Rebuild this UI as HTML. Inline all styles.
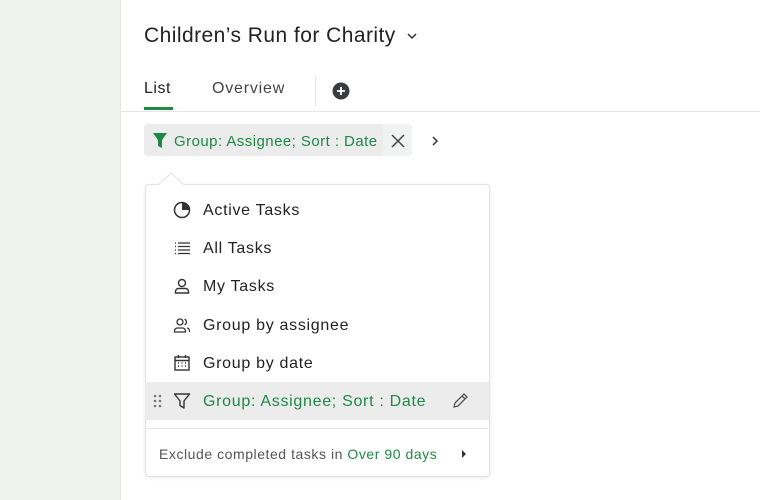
<!DOCTYPE html><html><head><style>
body{margin:0;width:760px;height:500px;position:relative;background:#fff;font-family:"Liberation Sans",sans-serif;color:#222;overflow:hidden}
.side{position:absolute;left:0;top:0;width:120px;height:500px;background:#eff3f0;border-right:1px solid #e3e7e4}
.abs{position:absolute}
.row{position:absolute;left:145px;width:344px;height:38px;display:flex;align-items:center;font-size:16px;color:#222;letter-spacing:.7px}
.row svg{position:absolute;left:28px}
.row span{position:absolute;left:58px;top:11px}
</style></head><body>
<div class="side"></div>
<div class="abs" style="left:144px;top:24px;font-size:21px;color:#222;letter-spacing:.45px">Children’s Run for Charity</div>
<svg class="abs" style="left:406px;top:31px" width="12" height="10"><path d="M2 3l4 4 4-4" stroke="#333" stroke-width="1.5" fill="none"/></svg>
<div class="abs" style="left:144px;top:80px;font-size:16px;color:#222;letter-spacing:.5px">List</div>
<div class="abs" style="left:144px;top:107px;width:29px;height:3px;background:#1d8a43"></div>
<div class="abs" style="left:212px;top:80px;font-size:16px;color:#444;letter-spacing:.8px">Overview</div>
<div class="abs" style="left:315px;top:76px;width:1px;height:30px;background:#e5e5e5"></div>
<svg class="abs" style="left:332px;top:82px" width="18" height="18"><circle cx="9" cy="9" r="8.5" fill="#3a3d40"/><path d="M9 5v8M5 9h8" stroke="#fff" stroke-width="1.8"/></svg>
<div class="abs" style="left:120px;top:111px;width:640px;height:1px;background:#e6e6e6"></div>
<div class="abs" style="left:144px;top:124px;width:239px;height:32px;background:#ececec;border-radius:4px 0 0 4px"></div>
<div class="abs" style="left:383px;top:124px;width:29px;height:32px;background:#f0f3f1;border-radius:0 4px 4px 0"></div>
<svg class="abs" style="left:152px;top:132px" width="16" height="17"><path d="M1 1h14l-5 7v8l-4-2V8z" fill="#1d8a43"/></svg>
<div class="abs" style="left:174px;top:133px;font-size:15px;color:#1d8a43;letter-spacing:.45px">Group: Assignee; Sort : Date</div>
<svg class="abs" style="left:390px;top:133px" width="16" height="16"><path d="M2 2l12 12M14 2L2 14" stroke="#444" stroke-width="1.5"/></svg>
<svg class="abs" style="left:430px;top:135px" width="10" height="12"><path d="M3 2l4 4-4 4" stroke="#333" stroke-width="1.5" fill="none"/></svg>
<div class="abs" style="left:145px;top:184px;width:343px;height:291px;border:1px solid #e2e2e2;border-radius:4px;box-shadow:0 1px 4px rgba(0,0,0,.08);background:#fff"></div>
<svg class="abs" style="left:158px;top:172px" width="28" height="14"><path d="M0 13L13 1l13 12" fill="#fff" stroke="#e2e2e2"/><rect x="0" y="13" width="28" height="2" fill="#fff"/></svg>
<div class="row" style="top:191px"><svg width="18" height="18"><circle cx="9" cy="9" r="7.5" stroke="#333" stroke-width="1.5" fill="none"/><path d="M9 9V1.5A7.5 7.5 0 0 1 16.5 9z" fill="#333"/></svg><span>Active Tasks</span></div>
<div class="row" style="top:229px"><svg width="18" height="18"><path d="M2 4h1M2 7.5h1M2 11h1M2 14.5h1M5 4h12M5 7.5h12M5 11h12M5 14.5h12" stroke="#333" stroke-width="1.3"/></svg><span>All Tasks</span></div>
<div class="row" style="top:267px"><svg width="18" height="18"><circle cx="9" cy="6" r="3.5" stroke="#333" stroke-width="1.4" fill="none"/><path d="M2.5 16v-1.5a3 3 0 0 1 3-3h7a3 3 0 0 1 3 3V16z" stroke="#333" stroke-width="1.4" fill="none"/></svg><span>My Tasks</span></div>
<div class="row" style="top:306px"><svg width="18" height="18"><circle cx="7" cy="6" r="3" stroke="#333" stroke-width="1.3" fill="none"/><path d="M1.5 16v-1a3 3 0 0 1 3-3h5a3 3 0 0 1 3 3v1zM11.5 3.2a3 3 0 0 1 0 5.6M14 12a3 3 0 0 1 2.5 3v1" stroke="#333" stroke-width="1.3" fill="none"/></svg><span>Group by assignee</span></div>
<div class="row" style="top:344px"><svg width="18" height="18"><rect x="2" y="3" width="14" height="13" stroke="#333" stroke-width="1.4" fill="none"/><path d="M2 6.5h14M5.5 1v3M12.5 1v3" stroke="#333" stroke-width="1.4"/><path d="M5 9h1M8.5 9h1M12 9h1M5 12h1M8.5 12h1M12 12h1" stroke="#333" stroke-width="1.4"/></svg><span>Group by date</span></div>
<div class="row" style="top:382px;background:#ececec;color:#1d8a43"><svg style="left:8px" width="10" height="16"><circle cx="2" cy="3" r="1.3" fill="#777"/><circle cx="7" cy="3" r="1.3" fill="#777"/><circle cx="2" cy="8" r="1.3" fill="#777"/><circle cx="7" cy="8" r="1.3" fill="#777"/><circle cx="2" cy="13" r="1.3" fill="#777"/><circle cx="7" cy="13" r="1.3" fill="#777"/></svg><svg width="18" height="18"><path d="M1.5 2h15l-5.5 7v7l-4-2.5V9z" stroke="#333" stroke-width="1.4" fill="none" stroke-linejoin="round"/></svg><span>Group: Assignee; Sort : Date</span><svg style="left:306px" width="18" height="18"><path d="M3 15l1-4 9-9 3 3-9 9zM11 4l3 3" stroke="#555" stroke-width="1.3" fill="none"/></svg></div>
<div class="abs" style="left:146px;top:428px;width:342px;height:1px;background:#e4e4e4"></div>
<div class="abs" style="left:159px;top:446px;font-size:14px;color:#555;letter-spacing:.55px">Exclude completed tasks in <span style="color:#1d8a43">Over 90 days</span></div>
<svg class="abs" style="left:461px;top:449px" width="6" height="10"><path d="M1 1l4 4-4 4z" fill="#333"/></svg>
</body></html>
